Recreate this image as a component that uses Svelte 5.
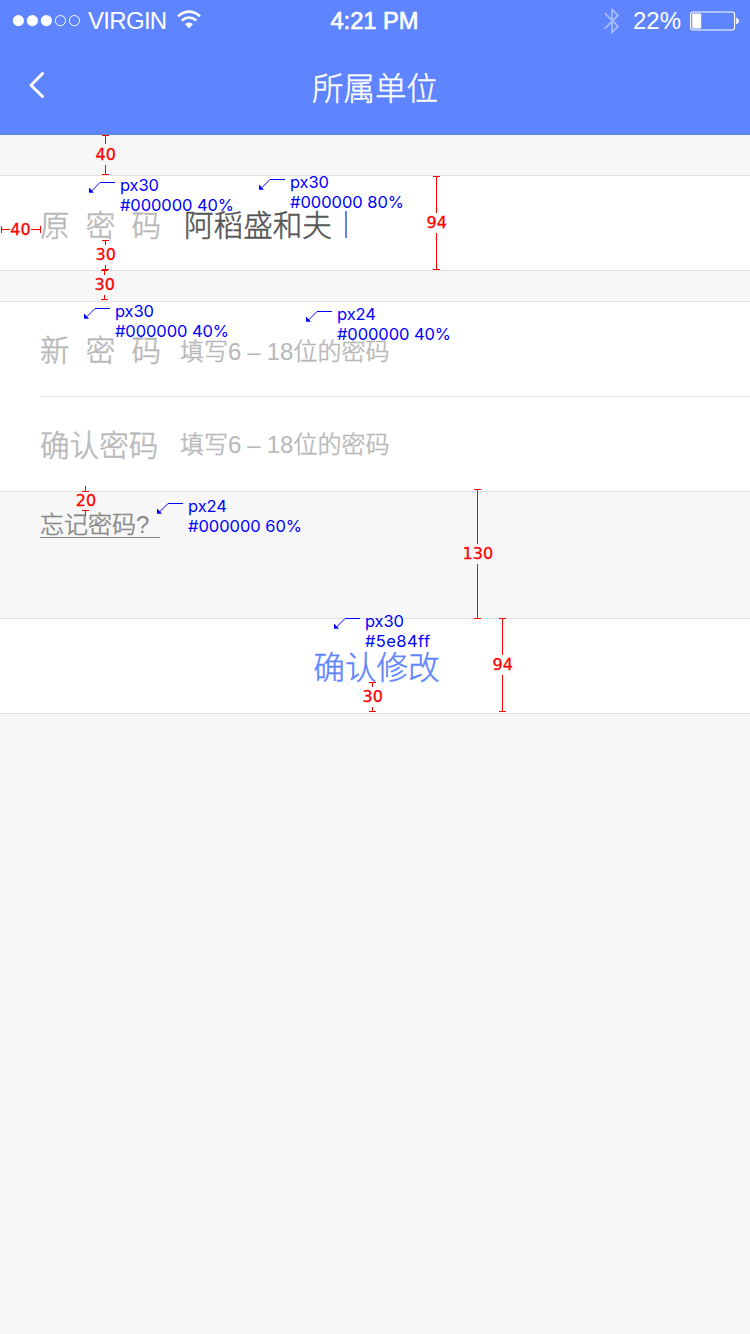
<script>
  const notes = [
    { x: 90, y: 182, tx: 120, ty: 191, size: 'px30', color: '#000000 40%', w: 114 },
    { x: 260, y: 179, tx: 290, ty: 188, size: 'px30', color: '#000000 80%', w: 114 },
    { x: 85, y: 308, tx: 115, ty: 317, size: 'px30', color: '#000000 40%', w: 114 },
    { x: 307, y: 311, tx: 337, ty: 320, size: 'px24', color: '#000000 40%', w: 114 },
    { x: 158, y: 503, tx: 188, ty: 512, size: 'px24', color: '#000000 60%', w: 114 },
    { x: 335, y: 618, tx: 365, ty: 627, size: 'px30', color: '#5e84ff', w: 65 }
  ];
  // Vertical rulers: top and bottom ticks, with a break a..b round the label.
  const rulers = [
    { x: 105, top: 135, a: 144, b: 165, bottom: 174, label: '40', ty: 160 },
    { x: 105, top: 240, a: 245, b: 265, bottom: 269, label: '30', ty: 260 },
    { x: 104, top: 270, a: 275, b: 295, bottom: 299, label: '30', ty: 290 },
    { x: 436, top: 176, a: 213, b: 233, bottom: 269, label: '94', ty: 228 },
    { x: 477, top: 489, a: 544, b: 564, bottom: 618, label: '130', ty: 559 },
    { x: 502, top: 618, a: 655, b: 675, bottom: 711, label: '94', ty: 670 },
    { x: 372, top: 682, a: 687, b: 707, bottom: 711, label: '30', ty: 702 }
  ];
</script>

<div class="screen">
  <header>
    <div class="status">
      <div class="side">
        <svg class="dots" width="68" height="12" viewBox="0 0 68 12">
          <g fill="#fff"><circle cx="6.4" cy="5.6" r="5.6" /><circle cx="20.4" cy="5.6" r="5.6" /><circle cx="34.4" cy="5.6" r="5.6" /></g>
          <g fill="none" stroke="#fff"><circle cx="48.4" cy="5.6" r="5.1" /><circle cx="62.4" cy="5.6" r="5.1" /></g>
        </svg>
        <span class="carrier">VIRGIN</span>
        <svg class="wifi" width="24" height="19" viewBox="0 0 24 19">
          <g fill="none" stroke="#fff" stroke-width="2.6">
            <path d="M1 6.2Q12-2.8 23 6.2" /><path d="M4.7 10.4Q12 4.6 19.3 10.4" />
          </g>
          <path d="M8 14Q12 11 16 14L12 18.4Z" fill="#fff" />
        </svg>
      </div>
      <strong>4:21 PM</strong>
      <div class="side right">
        <svg width="16" height="28" viewBox="0 0 16 28" fill="none" stroke="#a9bdff" stroke-width="1.7">
          <path d="M.8 6.2 14 19.4 8 25.3V2.6L14 8.4.8 21.6" />
        </svg>
        <span class="percent">22%</span>
        <svg class="battery" width="50" height="20" viewBox="0 0 50 20">
          <rect x=".6" y="1" width="44" height="18" rx="2.5" fill="none" stroke="#fff" stroke-width="1.1" />
          <rect x="2.2" y="2.6" width="9" height="14.8" rx="1" fill="#fff" />
          <path d="M46.2 6.5Q49 7.5 49 10T46.2 13.5Z" fill="#fff" />
        </svg>
      </div>
    </div>
    <nav>
      <svg class="back" width="18" height="28" viewBox="0 0 18 28" fill="none" stroke="#fff" stroke-width="3" stroke-linecap="round" stroke-linejoin="round">
        <path d="M14.5 2.5 3 14.2 14.5 25.5" />
      </svg>
      <h1>所属单位</h1>
    </nav>
  </header>

  <section class="card current">
    <div class="row">
      <span class="label spaced">原密码</span>
      <span class="value">阿稻盛和夫</span>
      <i class="caret"></i>
    </div>
  </section>

  <section class="card fresh">
    <div class="row first">
      <span class="label spaced">新密码</span>
      <span class="hint">填写<span class="num">6<b>–</b>18</span>位的密码</span>
    </div>
    <div class="row second">
      <span class="label">确认密码</span>
      <span class="hint">填写<span class="num">6<b>–</b>18</span>位的密码</span>
    </div>
  </section>

  <div class="help"><span class="forgot">忘记密码<span class="num">?</span></span></div>

  <section class="card submit">确认修改</section>

  <svg class="specs" width="750" height="1334" viewBox="0 0 750 1334">
    {#each rulers as r}
      <path class="rule" d="M{r.x - 3} {r.top + 0.5}h7M{r.x + 0.5} {r.top}V{r.a}M{r.x + 0.5} {r.b}V{r.bottom}M{r.x - 3} {r.bottom + 0.5}h7" />
      <text class="measure" x={r.x + 0.8} y={r.ty} text-anchor="middle">{r.label}</text>
    {/each}
    <path class="rule" d="M1.5 226v7M2 229.5h8M31 229.5h9M40.5 226v7" />
    <text class="measure" x="20.5" y="235" text-anchor="middle">40</text>
    <path class="rule" d="M85.5 486v5M82 491.5h7M82 510.5h7M85.5 511v5" />
    <text class="measure" x="86" y="506" text-anchor="middle">20</text>
    {#each notes as n}
      <path class="arrow" d="M{n.x + 25} {n.y + 0.5}h-15l-9 9" />
      <path class="tip" d="M{n.x - 1} {n.y + 5.5}l5 5.3h-5z" />
      <text class="note" x={n.tx} y={n.ty} textLength="39">{n.size}</text>
      <text class="note" x={n.tx} y={n.ty + 20} textLength={n.w}>{n.color}</text>
    {/each}
  </svg>
</div>

<style>
  :global(body) { margin: 0; }
  .screen {
    position: relative;
    width: 750px;
    height: 1334px;
    overflow: hidden;
    background: #f7f7f7;
    font-family: "Noto Sans CJK SC", sans-serif;
    font-weight: 300;
  }
  header {
    box-sizing: border-box;
    height: 135px;
    background: #5e84ff;
    border-bottom: 1px solid #5b91cf;
    color: #fff;
  }
  .status {
    display: grid;
    grid-template-columns: 1fr auto 1fr;
    align-items: center;
    height: 41px;
    padding: 0 10px 0 12px;
    font-family: "Liberation Sans", sans-serif;
    font-size: 24px;
    line-height: 40px;
  }
  strong {
    margin-right: 3px;
    font-size: 23.7px;
    font-weight: 400;
    -webkit-text-stroke: 0.7px #fff;
  }
  .side { display: flex; align-items: center; }
  .carrier { margin-left: 8px; font-size: 24px; letter-spacing: -0.7px; }
  .wifi { margin: 0 0 2px 11px; }
  .right { justify-content: flex-end; }
  .percent { margin: 0 9px 0 13px; }
  nav {
    display: grid;
    grid-template-columns: 90px 1fr 90px;
    align-items: center;
    height: 93px;
  }
  .back { margin: -5px 0 0 28px; }
  h1 {
    margin: -4px 0 0;
    font-size: 31.5px;
    font-weight: 300;
    line-height: 46px;
    text-align: center;
    -webkit-text-stroke: 0.4px;
  }
  .card { background: #fff; border: solid #e1e1e1; border-width: 1px 0; }
  .current { margin-top: 40px; }
  .fresh { margin-top: 30px; }
  .row { display: flex; align-items: center; height: 94px; margin-left: 40px; }
  .second { border-top: 1px solid #e1e1e1; }
  .label, .value, .hint, .forgot { -webkit-text-stroke: 0.5px; }
  .label { width: 140px; color: #b8b8b8; font-size: 29.6px; line-height: 44px; white-space: nowrap; }
  .spaced { letter-spacing: 16.2px; }
  .current .label { width: 144px; }
  .current .label, .value { padding-top: 2px; }
  .value { color: #555; font-size: 29.6px; line-height: 44px; }
  .caret { width: 2px; height: 27px; margin: 2px 0 0 13px; background: #5e84ff; }
  .hint { color: #b8b8b8; font-size: 24px; line-height: 36px; }
  .first .hint { padding-top: 4px; }
  .second .hint { padding-bottom: 1px; }
  .num { font-family: "Liberation Sans", sans-serif; -webkit-text-stroke: 0; }
  .num b { margin: 0 6px; font-weight: 300; }
  .help { height: 126px; padding-left: 40px; }
  .forgot {
    display: inline-block;
    box-sizing: border-box;
    width: 120px;
    height: 46px;
    padding-top: 13px;
    border-bottom: 1px solid #888;
    color: #888;
    font-size: 24px;
    line-height: 36px;
  }
  .submit {
    height: 94px;
    padding-left: 3px;
    color: #5e84ff;
    font-size: 31.6px;
    line-height: 92px;
    text-align: center;
    -webkit-text-stroke: 0.4px;
  }
  .specs { position: absolute; inset: 0; }
  .rule { fill: none; stroke: #f00; }
  .measure { fill: #f00; stroke: #f00; stroke-width: 0.3; font: 16px "DejaVu Sans", sans-serif; }
  .arrow { fill: none; stroke: #00f; }
  .tip { fill: #00f; }
  .note { fill: #00f; font: 400 16.5px Inter, sans-serif; }
</style>
